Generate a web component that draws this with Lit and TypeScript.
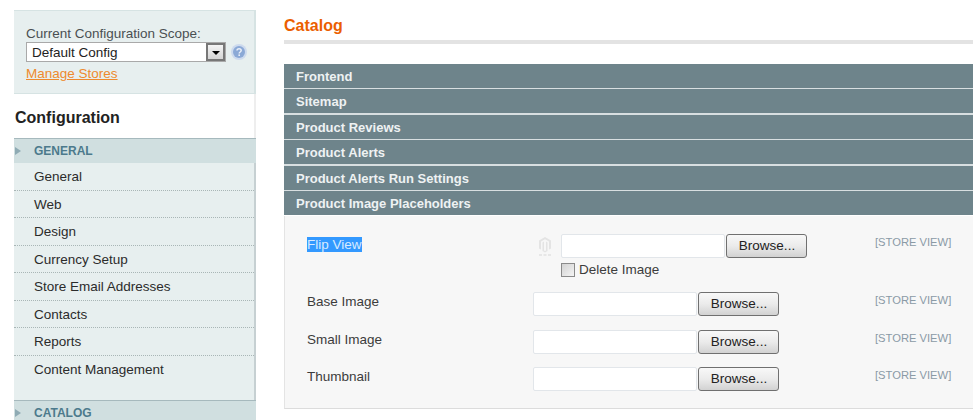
import {LitElement, html, css, svg} from 'lit';
import {customElement} from 'lit/decorators.js';

const menuItems = [
    'General', 'Web', 'Design', 'Currency Setup',
    'Store Email Addresses', 'Contacts', 'Reports', 'Content Management'
];

const sections = [
    'Frontend', 'Sitemap', 'Product Reviews', 'Product Alerts',
    'Product Alerts Run Settings', 'Product Image Placeholders'
];

const magentoIcon = svg`
    <path d="M7 1 L13 4.5 V12.5 L11 13.6 V5.6 L7 3.3 L3 5.6 V13.6 L1 12.5 V4.5 Z" fill="#e4e4e4"/>
    <path d="M6 5.5 V14.5 L7 15 L8 14.5 V5.5 L9.5 6.4 V15 L7 16.4 L4.5 15 V6.4 Z" fill="#e4e4e4"/>
    <rect x="1" y="18.5" width="3" height="1" fill="#d8d8d8"/>
    <rect x="5.5" y="18.5" width="3" height="1" fill="#d8d8d8"/>
    <rect x="10" y="18.5" width="3" height="1" fill="#d8d8d8"/>
`;

@customElement('app-root')
class AppRoot extends LitElement {
    static styles = css`
    :host {
        display: block;
        width: 973px;
        height: 420px;
        overflow: hidden;
        background: #fff;
        font-family: "Liberation Sans", Arial, sans-serif;
        font-size: 13.5px;
        color: #333;
    }

    .page {
        display: flex;
        align-items: flex-start;
        padding: 10px 0 0 14px;
    }

    /* sidebar */
    .side {
        width: 242px;
        flex: none;
        margin-right: 28px;
    }

    .scope {
        height: 84px;
        box-sizing: border-box;
        padding: 14px 0 0 12px;
        background: #e7efef;
        border: 1px solid #d6e3e3;
        border-right-width: 2px;
        border-left: 0;
    }

    .scope-label {
        line-height: 17px;
        color: #4a4f52;
    }

    .scope-row {
        display: flex;
        align-items: center;
    }

    .select {
        width: 200px;
        height: 20px;
        box-sizing: border-box;
        display: flex;
        align-items: center;
        justify-content: space-between;
        padding-left: 5px;
        background: #fff;
        border: 1px solid #a9a9a9;
        color: #222;
    }

    .select-btn {
        width: 19px;
        height: 18px;
        box-sizing: border-box;
        display: flex;
        align-items: center;
        justify-content: center;
        background: linear-gradient(#f4f4f4, #d4d4d4);
        border: 2px solid #777;
    }

    .select-btn i {
        display: block;
        margin-top: 2px;
        border-style: solid;
        border-width: 4px 4px 0;
        border-color: #000 transparent transparent;
    }

    .help {
        margin-left: 5px;
    }

    .manage {
        display: block;
        margin-top: 3px;
        line-height: 17px;
        color: #ee8a2e;
        text-decoration: underline;
    }

    .config-title {
        height: 44px;
        line-height: 47px;
        box-sizing: border-box;
        padding-left: 1px;
        font-size: 16px;
        font-weight: bold;
        color: #222;
        border-right: 2px solid #eee;
    }

    .group {
        height: 25px;
        box-sizing: border-box;
        display: flex;
        align-items: center;
        background: #d0dfe0;
        border-top: 1px solid #a6b9bd;
        font-size: 12px;
        line-height: 12px;
        font-weight: bold;
        color: #4c7a8c;
    }

    .group i {
        display: block;
        width: 0;
        margin: 0 13px 0 1px;
        border-style: solid;
        border-width: 4px 0 4px 6px;
        border-color: transparent transparent transparent #8fabb4;
    }

    .items {
        height: 237px;
        box-sizing: border-box;
        background: #e7efef;
        border-right: 2px solid #c6d0d2;
    }

    .item {
        height: 27.5px;
        box-sizing: border-box;
        padding-left: 20px;
        line-height: 27px;
        color: #2b2b2b;
        border-bottom: 1px dotted #a9b6b6;
    }

    .item:last-child {
        border-bottom: 0;
    }

    /* main column */
    .main {
        width: 689px;
        flex: none;
    }

    .title {
        height: 34px;
        box-sizing: border-box;
        padding-top: 6px;
        line-height: 20px;
        font-size: 16px;
        font-weight: bold;
        color: #eb5e00;
        border-bottom: 4px solid #e3e3e3;
    }

    .bars {
        display: flex;
        flex-direction: column;
        gap: 1.4px;
        margin-top: 20px;
        background: #d8dfe1;
    }

    .bar {
        height: 24px;
        line-height: 26px;
        padding-left: 12px;
        background: #6e848b;
        font-size: 13px;
        font-weight: bold;
        color: #eef2f3;
    }

    .panel {
        height: 193px;
        box-sizing: border-box;
        margin-top: 1px;
        padding-top: 18px;
        background: #f7f7f7;
        border-bottom: 1px solid #dcdcdc;
        border-left: 1px solid #e4e4e4;
    }

    .row {
        display: grid;
        grid-template-columns: 248px 342px auto;
        height: 38px;
    }

    .row.tall {
        height: 58px;
    }

    .row.short {
        height: 37px;
    }

    .label {
        padding: 1px 0 0 22px;
        line-height: 17px;
        color: #3c3c3c;
    }

    .tall .label {
        padding-top: 2px;
    }

    mark {
        background: #3399ff;
        color: #d8ebff;
    }

    .file {
        display: flex;
        align-items: flex-start;
    }

    .logo {
        margin: 2px 9px 0 5px;
    }

    .field {
        display: block;
        width: 164px;
        height: 24px;
        box-sizing: border-box;
        background: #fff;
        border: 1px solid #e2e6ea;
        border-radius: 2px;
    }

    .browse {
        width: 81px;
        height: 24px;
        box-sizing: border-box;
        margin-left: 1px;
        padding: 0 0 0 1px;
        background: linear-gradient(#f8f8f8 0, #ebebeb 50%, #d2d2d2 100%);
        border: 1px solid #707070;
        border-radius: 3px;
        font-family: inherit;
        font-size: 13.5px;
        color: #222;
    }

    .del {
        display: flex;
        align-items: center;
        margin: 2px 0 0 28px;
        line-height: 20px;
        color: #3c3c3c;
    }

    .check {
        width: 14px;
        height: 14px;
        box-sizing: border-box;
        margin-right: 4px;
        background: linear-gradient(135deg, #d2d2d2, #f4f4f4);
        border: 1px solid #8a8a8a;
    }

    .store {
        padding-top: 1px;
        line-height: 15px;
        font-size: 11.2px;
        color: #8a9aa6;
    }
    `;

    private fileInput(withLogo: boolean) {
        return html`
            <div class="file">
                ${withLogo
                    ? html`<svg class="logo" width="14" height="20" viewBox="0 0 14 20">${magentoIcon}</svg>`
                    : ''}
                <span class="field"></span>
                <button class="browse">Browse...</button>
            </div>
        `;
    }

    render() {
        return html`
            <div class="page">
                <aside class="side">
                    <div class="scope">
                        <div class="scope-label">Current Configuration Scope:</div>
                        <div class="scope-row">
                            <div class="select">
                                Default Config
                                <span class="select-btn"><i></i></span>
                            </div>
                            <svg class="help" width="16" height="16" viewBox="0 0 16 16">
                                <circle cx="8" cy="8" r="8" fill="#cddaee"/>
                                <circle cx="8" cy="8" r="6" fill="#8ba9d6"/>
                                <path d="M6 6.6 C6 4.2 10.2 4.2 10.2 6.6 C10.2 8 8.2 8 8.2 9.4" fill="none" stroke="#e8eef8" stroke-width="1.5"/>
                                <rect x="7.4" y="10.4" width="1.6" height="1.6" fill="#e8eef8"/>
                            </svg>
                        </div>
                        <a class="manage">Manage Stores</a>
                    </div>
                    <div class="config-title">Configuration</div>
                    <div class="group"><i></i>GENERAL</div>
                    <div class="items">
                        ${menuItems.map((item) => html`<div class="item">${item}</div>`)}
                    </div>
                    <div class="group"><i></i>CATALOG</div>
                </aside>

                <main class="main">
                    <div class="title">Catalog</div>
                    <div class="bars">
                        ${sections.map((name) => html`<div class="bar">${name}</div>`)}
                    </div>
                    <div class="panel">
                        <div class="row tall">
                            <div class="label"><mark>Flip View</mark></div>
                            <div>
                                ${this.fileInput(true)}
                                <div class="del"><span class="check"></span>Delete Image</div>
                            </div>
                            <div class="store">[STORE VIEW]</div>
                        </div>
                        <div class="row">
                            <div class="label">Base Image</div>
                            ${this.fileInput(false)}
                            <div class="store">[STORE VIEW]</div>
                        </div>
                        <div class="row short">
                            <div class="label">Small Image</div>
                            ${this.fileInput(false)}
                            <div class="store">[STORE VIEW]</div>
                        </div>
                        <div class="row">
                            <div class="label">Thumbnail</div>
                            ${this.fileInput(false)}
                            <div class="store">[STORE VIEW]</div>
                        </div>
                    </div>
                </main>
            </div>
        `;
    }
}
